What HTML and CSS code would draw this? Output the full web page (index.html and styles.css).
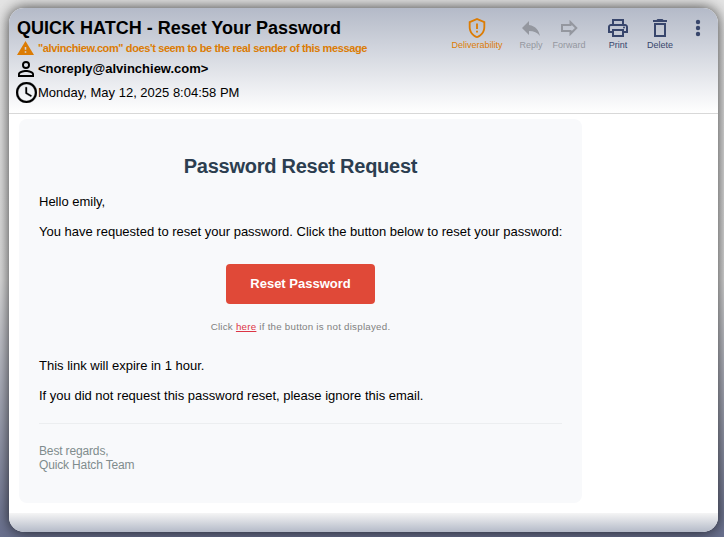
FILE: index.html
```html
<!DOCTYPE html>
<html lang="en">
<head>
<meta charset="utf-8">
<title>QUICK HATCH - Reset Your Password</title>
<link rel="stylesheet" href="styles.css">
</head>
<body>
<main class="window">
  <header class="header">
    <div class="details">
      <h1 class="subject"><span>QUICK HATCH - Reset Your Password</span></h1>
      <div class="row warning">
        <svg class="icon-warning" viewBox="1 2 22 19" preserveAspectRatio="none"><path fill="currentColor" d="M1 21h22L12 2 1 21zm12-3h-2v-2h2v2zm0-4h-2v-4h2v4z"/></svg>
        <span>"alvinchiew.com" does't seem to be the real sender of this message</span>
      </div>
      <div class="row sender">
        <svg class="icon-person" viewBox="4 4 16 16"><path fill="currentColor" d="M12 5.9a2.1 2.1 0 1 1 0 4.2 2.1 2.1 0 0 1 0-4.2m0 9c2.97 0 6.1 1.46 6.1 2.1v1.1H5.9V17c0-.64 3.13-2.1 6.1-2.1M12 4a4 4 0 1 0 0 8 4 4 0 0 0 0-8zm0 9c-2.67 0-8 1.34-8 4v3h16v-3c0-2.66-5.33-4-8-4z"/></svg>
        <span>&lt;noreply@alvinchiew.com&gt;</span>
      </div>
      <div class="row date">
        <svg class="icon-clock" viewBox="2 2 20 20"><path fill="currentColor" stroke="currentColor" stroke-width=".3" d="M11.99 2C6.47 2 2 6.48 2 12s4.47 10 9.99 10C17.52 22 22 17.52 22 12S17.52 2 11.99 2zM12 20c-4.42 0-8-3.58-8-8s3.58-8 8-8 8 3.58 8 8-3.58 8-8 8zm.5-13H11v6l5.25 3.15.75-1.23-4.5-2.67z"/></svg>
        <span>Monday, May 12, 2025 8:04:58 PM</span>
      </div>
    </div>
    <nav class="toolbar">
      <div class="tool deliverability">
        <svg viewBox="0 0 24 24"><path fill="currentColor" d="M12 1 3 5v6c0 5.55 3.84 10.74 9 12 5.16-1.26 9-6.45 9-12V5l-9-4zm7 10c0 4.52-2.98 8.69-7 9.93-4.02-1.24-7-5.41-7-9.93V6.3l7-3.11 7 3.11V11zM11 7h2v6h-2zm0 8h2v2h-2z"/></svg>
        <span>Deliverability</span>
      </div>
      <div class="tool reply disabled">
        <svg viewBox="0 0 24 24"><path fill="currentColor" d="M10 9V5l-7 7 7 7v-4.100c5 0 8.500 1.600 11 5.100-1-5-4-10-11-11z"/></svg>
        <span>Reply</span>
      </div>
      <div class="tool forward disabled">
        <svg viewBox="0 0 24 24"><path fill="none" stroke="currentColor" stroke-width="2" d="M5 9h8.500V6.200l5.800 5.800-5.800 5.800V15H5z"/></svg>
        <span>Forward</span>
      </div>
      <div class="tool print">
        <svg viewBox="0 0 24 24"><path fill="currentColor" fill-rule="evenodd" d="M19 8h-1V3H6v5H5c-1.660 0-3 1.340-3 3v6h4v4h12v-4h4v-6c0-1.660-1.340-3-3-3zM8 5h8v3H8V5zm8 14H8v-4h8v4zm2-4v-2H6v2H4v-4c0-.55.45-1 1-1h14c.55 0 1 .45 1 1v4h-2z"/><circle cx="18" cy="11.500" r="1" fill="currentColor"/></svg>
        <span>Print</span>
      </div>
      <div class="tool delete">
        <svg viewBox="0 0 24 24"><path fill="currentColor" fill-rule="evenodd" d="M6 21h12V7H6v14zM8 9h8v10H8V9zM15.500 4l-1-1h-5l-1 1H5v2h14V4z"/></svg>
        <span>Delete</span>
      </div>
      <div class="tool more">
        <svg viewBox="0 0 24 24"><g fill="currentColor"><circle cx="12" cy="6" r="2.200"/><circle cx="12" cy="12" r="2.200"/><circle cx="12" cy="18" r="2.200"/></g></svg>
      </div>
    </nav>
  </header>
  <section class="content">
    <article class="card">
      <h2 class="heading"><span>Password Reset Request</span></h2>
      <p><span>Hello emily,</span></p>
      <p class="request"><span>You have requested to reset your password. Click the button below to reset your password:</span></p>
      <div class="action"><a class="button">Reset Password</a></div>
      <div class="hint"><span>Click <a class="link">here</a> if the button is not displayed.</span></div>
      <p><span>This link will expire in 1 hour.</span></p>
      <p><span>If you did not request this password reset, please ignore this email.</span></p>
      <footer class="signature">Best regards,<br>Quick Hatch Team</footer>
    </article>
  </section>
  <div class="bottom"></div>
</main>
</body>
</html>
```
FILE: styles.css
```css
* { box-sizing: border-box; }
html { height: 100%; }
body {
  margin: 0;
  height: 537px;
  padding: 8px 6px 5px 9px;
  overflow: hidden;
  background: linear-gradient(#e4e4e4 0, #dedede 52%, #686f8d 100%);
  font-family: "Liberation Sans", Arial, sans-serif;
  color: #000;
}
.window {
  height: 524px;
  display: flex;
  flex-direction: column;
  border-radius: 15px;
  overflow: hidden;
  background: #fff;
  box-shadow: 0 0 14px rgba(0, 0, 0, .75);
}
.header {
  height: 106px;
  display: flex;
  justify-content: space-between;
  border-bottom: 1px solid #d8d8d8;
  background: linear-gradient(#b4bac8, #fff);
}
.details { padding: 8px 0 0 8px; white-space: nowrap; }
.subject { margin: 0; font-size: 18px; line-height: 24px; height: 24px; }
.row { display: flex; align-items: center; }
.warning { height: 15px; margin-bottom: 2px; gap: 4px; color: #dc7c04; font-size: 11px; font-weight: bold; letter-spacing: -.385px; }
.icon-warning { width: 17px; height: 14px; }
.sender { height: 23px; gap: 4px; font-size: 13px; font-weight: bold; }
.icon-person { width: 16px; height: 16px; margin-left: 1px; }
.date { height: 25px; gap: 1px; font-size: 13px; }
.icon-clock { width: 21px; height: 21px; margin-left: -1px; }
.toolbar { display: flex; padding: 8px 9px 0 0; }
.tool {
  display: flex;
  flex-direction: column;
  align-items: center;
  width: 42px;
  color: #38466c;
  font-size: 9px;
  line-height: 10px;
  white-space: nowrap;
}
.tool svg { width: 24px; height: 24px; flex: none; }
.tool.deliverability { width: 54px; color: #dc7c04; }
.tool.deliverability svg { width: 22px; height: 22px; margin: 1px 0; }
.tool.disabled { color: #94979f; }
.tool.reply { width: 54px; }
.tool.forward { width: 22px; margin-right: 17px; }
.tool.more { width: 23px; margin-left: 5px; }
.content { flex: 1; padding: 5px 0 0 10px; }
.card {
  width: 563px;
  height: 384px;
  padding: 32px 20px 0;
  border-radius: 8px;
  background: #f8f9fb;
  font-size: 13px;
  line-height: 15px;
  white-space: nowrap;
}
.heading { margin: 0 0 13px; font-size: 20px; line-height: 30px; letter-spacing: -.25px; color: #2c3e50; text-align: center; }
.card p { margin: 0 0 15px; }
.action { display: flex; justify-content: center; margin-top: 25px; }
.button {
  width: 149px;
  height: 40px;
  border-radius: 4px;
  background: #e04938;
  color: #fff;
  font-weight: bold;
  line-height: 39px;
  text-align: center;
}
.hint { margin: 16px 0 25px; text-align: center; font-size: 9.75px; line-height: 13px; letter-spacing: .24px; color: #818181; }
.link { color: #dc3545; text-decoration: underline; }
.signature {
  margin-top: 20px;
  padding-top: 20px;
  border-top: 1px solid #eceef0;
  font-size: 12px;
  line-height: 14px;
  letter-spacing: -.15px;
  color: #7f8c8d;
}
.bottom { height: 19px; background: linear-gradient(#f5f5f5, #b4bac8); }
```
